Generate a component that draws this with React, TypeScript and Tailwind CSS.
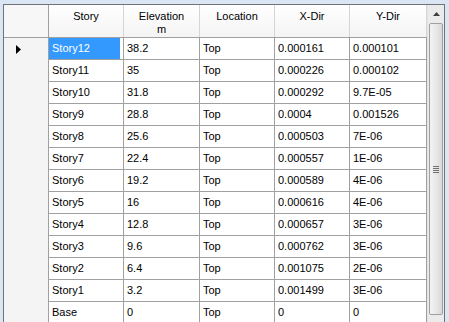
const rows = [
  ["Story12", "38.2", "Top", "0.000161", "0.000101"],
  ["Story11", "35", "Top", "0.000226", "0.000102"],
  ["Story10", "31.8", "Top", "0.000292", "9.7E-05"],
  ["Story9", "28.8", "Top", "0.0004", "0.001526"],
  ["Story8", "25.6", "Top", "0.000503", "7E-06"],
  ["Story7", "22.4", "Top", "0.000557", "1E-06"],
  ["Story6", "19.2", "Top", "0.000589", "4E-06"],
  ["Story5", "16", "Top", "0.000616", "4E-06"],
  ["Story4", "12.8", "Top", "0.000657", "3E-06"],
  ["Story3", "9.6", "Top", "0.000762", "3E-06"],
  ["Story2", "6.4", "Top", "0.001075", "2E-06"],
  ["Story1", "3.2", "Top", "0.001499", "3E-06"],
  ["Base", "0", "Top", "0", "0"],
];

const widths = ["w-[75px]", "w-[76px]", "w-[75px]", "w-[75px]", "w-[77px]"];

function HeaderCell({ w, children }: { w: string; children: React.ReactNode }) {
  return (
    <div className={`${w} shrink-0 h-full border-r border-[#d5d5d5] flex flex-col items-center pt-[5px] leading-[13px]`}>
      {children}
    </div>
  );
}

function Scrollbar() {
  return (
    <div className="w-[17px] shrink-0 h-full bg-[#ebebeb] border-l border-[#e3e3e3] flex flex-col">
      <div className="h-[17px] flex items-center justify-center">
        <svg width="7" height="4" viewBox="0 0 7 4">
          <path d="M3.5 0 L7 4 L0 4 Z" fill="#404040" />
        </svg>
      </div>
      <div className="flex-1 mx-[1px] my-[1px] rounded-[2px] border border-[#a0a0a0] bg-gradient-to-r from-[#f3f3f3] via-[#e8e8e8] to-[#d8d8d8] flex items-center justify-center">
        <div className="flex flex-col gap-[1px]">
          <div className="w-[6px] h-[1px] bg-[#707070]" />
          <div className="w-[6px] h-[1px] bg-[#707070]" />
          <div className="w-[6px] h-[1px] bg-[#707070]" />
          <div className="w-[6px] h-[1px] bg-[#707070]" />
        </div>
      </div>
      <div className="h-[17px] flex items-center justify-center">
        <svg width="7" height="4" viewBox="0 0 7 4">
          <path d="M0 0 L7 0 L3.5 4 Z" fill="#404040" />
        </svg>
      </div>
    </div>
  );
}

export default function App() {
  return (
    <div
      className="w-[449px] h-[322px] overflow-hidden bg-[#dbe6f4] pt-[4px] pl-[3px] pr-[4px] text-[11px] text-black"
      style={{ fontFamily: '"Liberation Sans", Arial, sans-serif' }}
    >
      <div className="h-[330px] border border-[#6f7378] bg-[#ababab] flex">
        <div className="flex-1 flex flex-col bg-white">
          {/* header */}
          <div className="h-[33px] flex border-b border-[#a0a0a0] bg-gradient-to-b from-[#ffffff] to-[#f4f4f4]">
            <div className="w-[45px] shrink-0 h-full border-r border-[#a0a0a0] bg-[#f7f7f7]" />
            <HeaderCell w={widths[0]}>Story</HeaderCell>
            <HeaderCell w={widths[1]}>
              <span>Elevation</span>
              <span>m</span>
            </HeaderCell>
            <HeaderCell w={widths[2]}>Location</HeaderCell>
            <HeaderCell w={widths[3]}>X-Dir</HeaderCell>
            <HeaderCell w={widths[4]}>Y-Dir</HeaderCell>
          </div>
          {rows.map((r, i) => (
            <div key={r[0]} className="h-[22px] flex shrink-0">
              <div className="w-[45px] shrink-0 h-full border-r border-[#a0a0a0] bg-[#f4f4f4] flex items-center pl-[12px]">
                {i === 0 && (
                  <svg width="5" height="9" viewBox="0 0 5 9">
                    <path d="M0 0 L5 4.5 L0 9 Z" fill="#000" />
                  </svg>
                )}
              </div>
              {r.map((c, j) => (
                <div
                  key={j}
                  className={`${widths[j]} shrink-0 h-full border-r border-b border-[#a0a0a0] flex items-center pl-[3px]`}
                >
                  {i === 0 && j === 0 ? (
                    <div className="-ml-[3px] w-full h-full bg-[#3399ff] text-white flex items-center pl-[3px]">{c}</div>
                  ) : (
                    c
                  )}
                </div>
              ))}
            </div>
          ))}
        </div>
        <Scrollbar />
      </div>
    </div>
  );
}
